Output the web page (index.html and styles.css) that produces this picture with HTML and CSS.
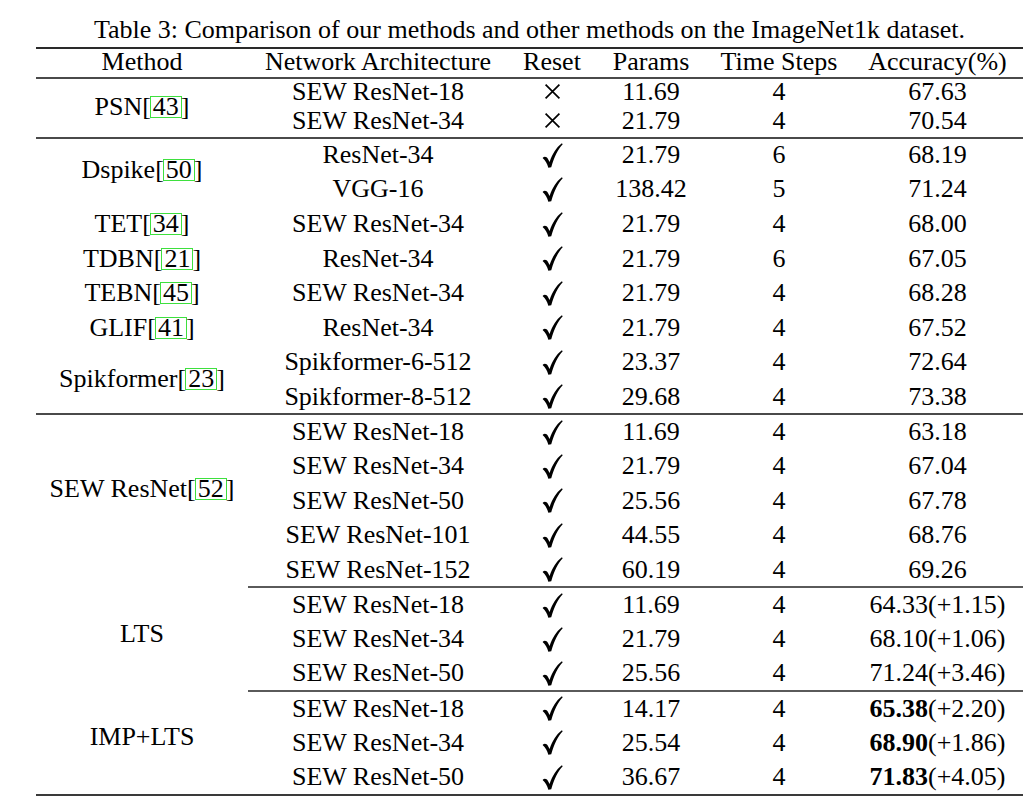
FILE: index.html
```html
<!DOCTYPE html>
<html>
<head>
<meta charset="utf-8">
<link rel="stylesheet" href="styles.css">
</head>
<body>
<div class="page">
  <div class="caption">Table 3: Comparison of our methods and other methods on the ImageNet1k dataset.</div>
  <table class="results">
    <colgroup>
      <col class="c-method"><col class="c-arch"><col class="c-reset"><col class="c-params"><col class="c-steps"><col class="c-acc">
    </colgroup>
    <thead>
      <tr class="r-head">
        <th>Method</th><th>Network Architecture</th><th>Reset</th><th>Params</th><th>Time Steps</th><th>Accuracy(%)</th>
      </tr>
    </thead>
    <tbody class="sec">
      <tr class="r-small">
        <td rowspan="2" class="method">PSN[<span class="cite">43</span>]</td>
        <td>SEW ResNet-18</td><td><svg class="cross" viewBox="0 0 16 16"><path d="M1.5,1.5 L14.5,14.5 M14.5,1.5 L1.5,14.5"/></svg></td><td>11.69</td><td>4</td><td>67.63</td>
      </tr>
      <tr class="r-small">
        <td>SEW ResNet-34</td><td><svg class="cross" viewBox="0 0 16 16"><path d="M1.5,1.5 L14.5,14.5 M14.5,1.5 L1.5,14.5"/></svg></td><td>21.79</td><td>4</td><td>70.54</td>
      </tr>
    </tbody>
    <tbody class="sec">
      <tr>
        <td rowspan="2" class="method up-s">Dspike[<span class="cite">50</span>]</td>
        <td>ResNet-34</td><td><svg class="check" viewBox="0 0 20 24"><path d="M0.5,14.5 C2,12.6 4.3,12.8 5.8,15.6 L7.2,18.2 C9.8,10.6 13.6,4.2 19,0.2 L19.8,1.3 C15.2,6.2 11.6,13.4 8.8,23.3 L6,23.8 C4.9,19.8 3.2,16.9 0.5,14.5 Z"/></svg></td><td>21.79</td><td>6</td><td>68.19</td>
      </tr>
      <tr>
        <td>VGG-16</td><td><svg class="check" viewBox="0 0 20 24"><path d="M0.5,14.5 C2,12.6 4.3,12.8 5.8,15.6 L7.2,18.2 C9.8,10.6 13.6,4.2 19,0.2 L19.8,1.3 C15.2,6.2 11.6,13.4 8.8,23.3 L6,23.8 C4.9,19.8 3.2,16.9 0.5,14.5 Z"/></svg></td><td>138.42</td><td>5</td><td>71.24</td>
      </tr>
      <tr>
        <td class="method">TET[<span class="cite">34</span>]</td>
        <td>SEW ResNet-34</td><td><svg class="check" viewBox="0 0 20 24"><path d="M0.5,14.5 C2,12.6 4.3,12.8 5.8,15.6 L7.2,18.2 C9.8,10.6 13.6,4.2 19,0.2 L19.8,1.3 C15.2,6.2 11.6,13.4 8.8,23.3 L6,23.8 C4.9,19.8 3.2,16.9 0.5,14.5 Z"/></svg></td><td>21.79</td><td>4</td><td>68.00</td>
      </tr>
      <tr>
        <td class="method">TDBN[<span class="cite">21</span>]</td>
        <td>ResNet-34</td><td><svg class="check" viewBox="0 0 20 24"><path d="M0.5,14.5 C2,12.6 4.3,12.8 5.8,15.6 L7.2,18.2 C9.8,10.6 13.6,4.2 19,0.2 L19.8,1.3 C15.2,6.2 11.6,13.4 8.8,23.3 L6,23.8 C4.9,19.8 3.2,16.9 0.5,14.5 Z"/></svg></td><td>21.79</td><td>6</td><td>67.05</td>
      </tr>
      <tr>
        <td class="method">TEBN[<span class="cite">45</span>]</td>
        <td>SEW ResNet-34</td><td><svg class="check" viewBox="0 0 20 24"><path d="M0.5,14.5 C2,12.6 4.3,12.8 5.8,15.6 L7.2,18.2 C9.8,10.6 13.6,4.2 19,0.2 L19.8,1.3 C15.2,6.2 11.6,13.4 8.8,23.3 L6,23.8 C4.9,19.8 3.2,16.9 0.5,14.5 Z"/></svg></td><td>21.79</td><td>4</td><td>68.28</td>
      </tr>
      <tr>
        <td class="method">GLIF[<span class="cite">41</span>]</td>
        <td>ResNet-34</td><td><svg class="check" viewBox="0 0 20 24"><path d="M0.5,14.5 C2,12.6 4.3,12.8 5.8,15.6 L7.2,18.2 C9.8,10.6 13.6,4.2 19,0.2 L19.8,1.3 C15.2,6.2 11.6,13.4 8.8,23.3 L6,23.8 C4.9,19.8 3.2,16.9 0.5,14.5 Z"/></svg></td><td>21.79</td><td>4</td><td>67.52</td>
      </tr>
      <tr>
        <td rowspan="2" class="method">Spikformer[<span class="cite">23</span>]</td>
        <td>Spikformer-6-512</td><td><svg class="check" viewBox="0 0 20 24"><path d="M0.5,14.5 C2,12.6 4.3,12.8 5.8,15.6 L7.2,18.2 C9.8,10.6 13.6,4.2 19,0.2 L19.8,1.3 C15.2,6.2 11.6,13.4 8.8,23.3 L6,23.8 C4.9,19.8 3.2,16.9 0.5,14.5 Z"/></svg></td><td>23.37</td><td>4</td><td>72.64</td>
      </tr>
      <tr>
        <td>Spikformer-8-512</td><td><svg class="check" viewBox="0 0 20 24"><path d="M0.5,14.5 C2,12.6 4.3,12.8 5.8,15.6 L7.2,18.2 C9.8,10.6 13.6,4.2 19,0.2 L19.8,1.3 C15.2,6.2 11.6,13.4 8.8,23.3 L6,23.8 C4.9,19.8 3.2,16.9 0.5,14.5 Z"/></svg></td><td>29.68</td><td>4</td><td>73.38</td>
      </tr>
    </tbody>
    <tbody class="sec">
      <tr>
        <td rowspan="5" class="method up-l">SEW ResNet[<span class="cite">52</span>]</td>
        <td>SEW ResNet-18</td><td><svg class="check" viewBox="0 0 20 24"><path d="M0.5,14.5 C2,12.6 4.3,12.8 5.8,15.6 L7.2,18.2 C9.8,10.6 13.6,4.2 19,0.2 L19.8,1.3 C15.2,6.2 11.6,13.4 8.8,23.3 L6,23.8 C4.9,19.8 3.2,16.9 0.5,14.5 Z"/></svg></td><td>11.69</td><td>4</td><td>63.18</td>
      </tr>
      <tr>
        <td>SEW ResNet-34</td><td><svg class="check" viewBox="0 0 20 24"><path d="M0.5,14.5 C2,12.6 4.3,12.8 5.8,15.6 L7.2,18.2 C9.8,10.6 13.6,4.2 19,0.2 L19.8,1.3 C15.2,6.2 11.6,13.4 8.8,23.3 L6,23.8 C4.9,19.8 3.2,16.9 0.5,14.5 Z"/></svg></td><td>21.79</td><td>4</td><td>67.04</td>
      </tr>
      <tr>
        <td>SEW ResNet-50</td><td><svg class="check" viewBox="0 0 20 24"><path d="M0.5,14.5 C2,12.6 4.3,12.8 5.8,15.6 L7.2,18.2 C9.8,10.6 13.6,4.2 19,0.2 L19.8,1.3 C15.2,6.2 11.6,13.4 8.8,23.3 L6,23.8 C4.9,19.8 3.2,16.9 0.5,14.5 Z"/></svg></td><td>25.56</td><td>4</td><td>67.78</td>
      </tr>
      <tr>
        <td>SEW ResNet-101</td><td><svg class="check" viewBox="0 0 20 24"><path d="M0.5,14.5 C2,12.6 4.3,12.8 5.8,15.6 L7.2,18.2 C9.8,10.6 13.6,4.2 19,0.2 L19.8,1.3 C15.2,6.2 11.6,13.4 8.8,23.3 L6,23.8 C4.9,19.8 3.2,16.9 0.5,14.5 Z"/></svg></td><td>44.55</td><td>4</td><td>68.76</td>
      </tr>
      <tr>
        <td>SEW ResNet-152</td><td><svg class="check" viewBox="0 0 20 24"><path d="M0.5,14.5 C2,12.6 4.3,12.8 5.8,15.6 L7.2,18.2 C9.8,10.6 13.6,4.2 19,0.2 L19.8,1.3 C15.2,6.2 11.6,13.4 8.8,23.3 L6,23.8 C4.9,19.8 3.2,16.9 0.5,14.5 Z"/></svg></td><td>60.19</td><td>4</td><td>69.26</td>
      </tr>
      <tr class="cline">
        <td rowspan="3" class="method up-m">LTS</td>
        <td>SEW ResNet-18</td><td><svg class="check" viewBox="0 0 20 24"><path d="M0.5,14.5 C2,12.6 4.3,12.8 5.8,15.6 L7.2,18.2 C9.8,10.6 13.6,4.2 19,0.2 L19.8,1.3 C15.2,6.2 11.6,13.4 8.8,23.3 L6,23.8 C4.9,19.8 3.2,16.9 0.5,14.5 Z"/></svg></td><td>11.69</td><td>4</td><td>64.33(+1.15)</td>
      </tr>
      <tr>
        <td>SEW ResNet-34</td><td><svg class="check" viewBox="0 0 20 24"><path d="M0.5,14.5 C2,12.6 4.3,12.8 5.8,15.6 L7.2,18.2 C9.8,10.6 13.6,4.2 19,0.2 L19.8,1.3 C15.2,6.2 11.6,13.4 8.8,23.3 L6,23.8 C4.9,19.8 3.2,16.9 0.5,14.5 Z"/></svg></td><td>21.79</td><td>4</td><td>68.10(+1.06)</td>
      </tr>
      <tr>
        <td>SEW ResNet-50</td><td><svg class="check" viewBox="0 0 20 24"><path d="M0.5,14.5 C2,12.6 4.3,12.8 5.8,15.6 L7.2,18.2 C9.8,10.6 13.6,4.2 19,0.2 L19.8,1.3 C15.2,6.2 11.6,13.4 8.8,23.3 L6,23.8 C4.9,19.8 3.2,16.9 0.5,14.5 Z"/></svg></td><td>25.56</td><td>4</td><td>71.24(+3.46)</td>
      </tr>
      <tr class="cline">
        <td rowspan="3" class="method up-m">IMP+LTS</td>
        <td>SEW ResNet-18</td><td><svg class="check" viewBox="0 0 20 24"><path d="M0.5,14.5 C2,12.6 4.3,12.8 5.8,15.6 L7.2,18.2 C9.8,10.6 13.6,4.2 19,0.2 L19.8,1.3 C15.2,6.2 11.6,13.4 8.8,23.3 L6,23.8 C4.9,19.8 3.2,16.9 0.5,14.5 Z"/></svg></td><td>14.17</td><td>4</td><td><b>65.38</b>(+2.20)</td>
      </tr>
      <tr>
        <td>SEW ResNet-34</td><td><svg class="check" viewBox="0 0 20 24"><path d="M0.5,14.5 C2,12.6 4.3,12.8 5.8,15.6 L7.2,18.2 C9.8,10.6 13.6,4.2 19,0.2 L19.8,1.3 C15.2,6.2 11.6,13.4 8.8,23.3 L6,23.8 C4.9,19.8 3.2,16.9 0.5,14.5 Z"/></svg></td><td>25.54</td><td>4</td><td><b>68.90</b>(+1.86)</td>
      </tr>
      <tr>
        <td>SEW ResNet-50</td><td><svg class="check" viewBox="0 0 20 24"><path d="M0.5,14.5 C2,12.6 4.3,12.8 5.8,15.6 L7.2,18.2 C9.8,10.6 13.6,4.2 19,0.2 L19.8,1.3 C15.2,6.2 11.6,13.4 8.8,23.3 L6,23.8 C4.9,19.8 3.2,16.9 0.5,14.5 Z"/></svg></td><td>36.67</td><td>4</td><td><b>71.83</b>(+4.05)</td>
      </tr>
    </tbody>
  </table>
</div>
</body>
</html>
```

FILE: styles.css
```css
html, body {
  margin: 0;
  padding: 0;
  background: #ffffff;
}

.page {
  width: 987px;
  margin-left: 36px;
  padding-top: 15px;
  font-family: "Liberation Serif", "Times New Roman", serif;
  font-size: 26px;
  color: #000;
}

.caption {
  text-align: center;
  line-height: 30px;
  height: 32px;
  white-space: nowrap;
}

.results {
  width: 987px;
  border-collapse: collapse;
  table-layout: fixed;
  border-top: 2px solid #2a2a2a;
  border-bottom: 2px solid #3a3a3a;
}

.c-method { width: 212px; }
.c-arch { width: 260px; }
.c-reset { width: 88px; }
.c-params { width: 110px; }
.c-steps { width: 146px; }
.c-acc { width: 171px; }

.results th,
.results td {
  padding: 0;
  text-align: center;
  vertical-align: middle;
  font-weight: normal;
  line-height: 22px;
  white-space: nowrap;
}

.results td b {
  font-weight: bold;
}

.results tr {
  height: 34.6px;
}

.results tr.r-head {
  height: 30px;
}

.r-head th {
  padding-bottom: 2px;
  border-bottom: 2px solid #4a4a4a;
}

.results tr.r-small {
  height: 29.8px;
}

.r-small td {
  padding-bottom: 2px;
}

.sec + .sec tr:first-child td {
  border-top: 2px solid #4a4a4a;
}

.cline td:not(.method) {
  border-top: 2px solid #5a5a5a;
}

.cite {
  display: inline-block;
  border: 1px solid #3ee03e;
  line-height: 20px;
  padding: 0 2px;
  margin: 0 -1px;
}

.method.up-s { padding-bottom: 6px; }
.method.up-m { padding-bottom: 10px; }
.method.up-l { padding-bottom: 24px; }

.check {
  width: 21px;
  height: 25px;
  vertical-align: -4px;
  fill: #000;
}

.cross {
  width: 17px;
  height: 17px;
  vertical-align: 0;
  fill: none;
  stroke: #000;
  stroke-width: 1.6;
}
```
